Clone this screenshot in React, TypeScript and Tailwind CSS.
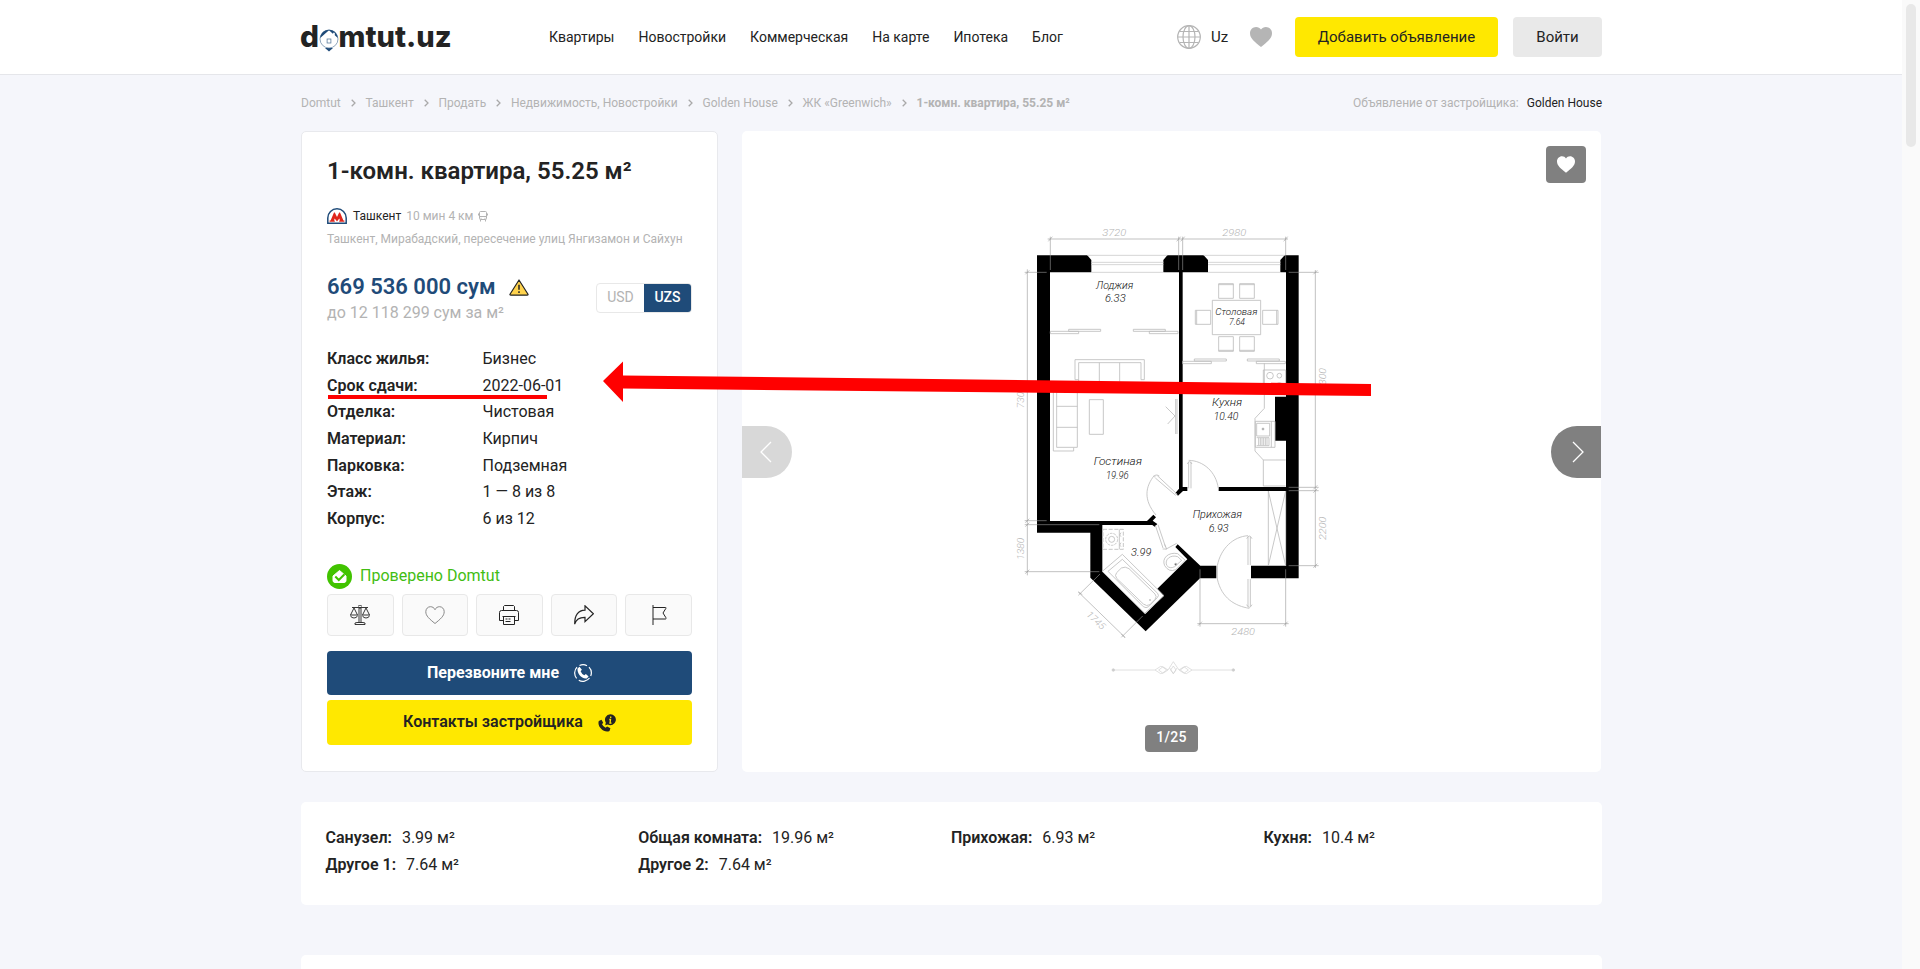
import type { ReactNode } from "react";

const navLinks = ["Квартиры", "Новостройки", "Коммерческая", "На карте", "Ипотека", "Блог"];

const crumbs = ["Domtut", "Ташкент", "Продать", "Недвижимость, Новостройки", "Golden House", "ЖК «Greenwich»"];

const details = [
  ["Класс жилья:", "Бизнес"],
  ["Срок сдачи:", "2022-06-01"],
  ["Отделка:", "Чистовая"],
  ["Материал:", "Кирпич"],
  ["Парковка:", "Подземная"],
  ["Этаж:", "1 — 8 из 8"],
  ["Корпус:", "6 из 12"],
];

const rooms = [
  ["Санузел:", "3.99 м²"],
  ["Общая комната:", "19.96 м²"],
  ["Прихожая:", "6.93 м²"],
  ["Кухня:", "10.4 м²"],
  ["Другое 1:", "7.64 м²"],
  ["Другое 2:", "7.64 м²"],
];

function Logo() {
  return (
    <svg className="w-[152px] h-[36px] shrink-0" viewBox="300 18 152 36">
      <g fontFamily="Inter, sans-serif" fontWeight="800" fontSize="29.500" fill="#232323">
        <text x="300" y="45.500" textLength="19" lengthAdjust="spacingAndGlyphs">d</text>
        <text x="338.500" y="45.500" textLength="113" lengthAdjust="spacingAndGlyphs">mtut.uz</text>
      </g>
      <path d="M329 50.500l-4-3.600h8z" fill="#1f4b79" />
      <circle cx="329" cy="38" r="9" fill="#fff" stroke="#5f7f9f" strokeWidth="0.700" />
      <path d="M320.200 37c1-11 16.600-11 17.600 0l-3-2.700v-2.600h-1.700v1.200l-4.100-3.700z" fill="#1f4b79" />
      <rect x="327.100" y="38" width="3.800" height="4" fill="none" stroke="#5f7f9f" strokeWidth="0.800" />
    </svg>
  );
}

function HeartSolid({ className }: { className: string }) {
  return (
    <svg className={className} viewBox="0 0 22 20" fill="currentColor">
      <path d="M11 20C4.800 15 0 11.500 0 6.300 0 2.800 2.700 0 6.100 0 8.200 0 9.900 1 11 2.600 12.100 1 13.800 0 15.900 0 19.300 0 22 2.800 22 6.300 22 11.500 17.200 15 11 20z" />
    </svg>
  );
}

function Chevron() {
  return (
    <svg className="w-[5px] h-[8px] mx-[9.900px]" viewBox="0 0 5 8" fill="none" stroke="#a9a9a9" strokeWidth="1.300">
      <path d="M.7.7L4 4 .7 7.300" />
    </svg>
  );
}

function Header() {
  return (
    <header className="h-[75px] bg-white border-b border-[#e5e6ea]">
      <div className="w-[1301px] ml-[301px] h-[74px] flex items-center">
        <div className="-ml-px"><Logo /></div>
        <nav className="flex gap-6 ml-[97px] w-[628px] text-[14px]">
          {navLinks.map((l) => (
            <a key={l} className="whitespace-nowrap">{l}</a>
          ))}
        </nav>
        <svg className="w-6 h-6" viewBox="0 0 24 24" fill="none" stroke="#b5b5b5" strokeWidth="1.200">
          <circle cx="12" cy="12" r="11.300" />
          <ellipse cx="12" cy="12" rx="6" ry="11.300" />
          <path d="M12 .7v22.600M.7 12h22.600M2.600 6.500h18.800M2.600 17.500h18.800" />
        </svg>
        <span className="ml-[10px] w-[39px] text-[15px]">Uz</span>
        <HeartSolid className="w-[22px] h-[20px] text-[#b5b5b5]" />
        <button className="ml-[23px] w-[203px] h-10 bg-[#ffe800] rounded-[4px] text-[15px] whitespace-nowrap">Добавить объявление</button>
        <button className="ml-[15px] w-[89px] h-10 bg-[#e9e9e9] rounded-[4px] text-[15px]">Войти</button>
      </div>
    </header>
  );
}

function Breadcrumbs() {
  return (
    <div className="flex items-center h-[56px] text-[12px] text-[#b3b3b3]">
      {crumbs.map((c) => (
        <span key={c} className="flex items-center whitespace-nowrap">
          {c}
          <Chevron />
        </span>
      ))}
      <span className="font-bold">1-комн. квартира, 55.25 м²</span>
      <span className="ml-auto">Объявление от застройщика:</span>
      <span className="ml-[8px] text-[#232323]">Golden House</span>
    </div>
  );
}

function Action({ children }: { children: ReactNode }) {
  return (
    <div className="flex-1 h-[42px] flex items-center justify-center bg-[#fafafa] border border-[#e8e8e8] rounded-[4px]">
      <svg className="w-5 h-5" viewBox="0 0 20 20" fill="none" stroke="#232323" strokeWidth="1">
        {children}
      </svg>
    </div>
  );
}

function InfoCard() {
  return (
    <div className="relative w-[417px] h-[641px] bg-white border border-[#e8e9ed] rounded-[5px] px-[25px] flex flex-col">
      <h1 className="mt-[22px] text-[24px] leading-[34px] font-semibold whitespace-nowrap">1-комн. квартира, 55.25 м²</h1>
      <div className="flex items-center h-4 mt-[20px] text-[12px]">
        <svg className="w-5 h-4" viewBox="0 0 20 16">
          <path d="M.8 15.200V10a9.200 9.200 0 0118.400 0v5.200z" fill="#fff" stroke="#1f4b79" strokeWidth="1.500" />
          <path d="M2.600 13.800v-1.200h1L7 4.500h.8L10 9l2.200-4.500h.8l3.400 8.100h1v1.200h-5.200v-1.200h.8l-.7-2.200L10 13.500l-2.300-3.100-.7 2.200h.8v1.200z" fill="#e0261c" />
        </svg>
        <span className="ml-[6px]">Ташкент</span>
        <span className="ml-[5px] text-[#b3b3b3]">10 мин 4 км</span>
        <svg className="ml-[5px] w-[10px] h-[11px]" viewBox="0 0 10 11" fill="none" stroke="#b3b3b3">
          <rect x="1.500" y=".5" width="7" height="8" rx="1" />
          <path d="M1.500 5.500h7M.5 2.500v2M9.500 2.500v2M2.500 7.300h1M6.500 7.300h1M2.500 8.500v2M7.500 8.500v2" />
        </svg>
      </div>
      <div className="mt-[6px] text-[12px] leading-[18px] text-[#b3b3b3] whitespace-nowrap">Ташкент, Мирабадский, пересечение улиц Янгизамон и Сайхун</div>

      <div className="flex mt-[24px] h-[51px]">
        <div className="flex-1">
          <div className="flex items-center h-[28px]">
            <span className="text-[22px] font-semibold text-[#1f4b79] whitespace-nowrap">669 536 000 сум</span>
            <svg className="ml-[13px] mt-[3px] w-5 h-[17px]" viewBox="0 0 20 17">
              <path d="M10 1l9 14.200q.3 1-.8 1H1.800q-1.100 0-.8-1z" fill="#ffd34d" stroke="#232323" strokeWidth="1.200" strokeLinejoin="round" />
              <path d="M10 5.800v5M10 12.300v1.700" stroke="#232323" strokeWidth="1.500" />
            </svg>
          </div>
          <div className="mt-px text-[16px] leading-[24px] text-[#b3b3b3] whitespace-nowrap">до 12 118 299 сум за м²</div>
        </div>
        <div className="mt-[11px] w-[96px] h-[30px] flex border border-[#e8e8e8] rounded-[4px] overflow-hidden text-[14px] leading-[27px] text-center">
          <span className="w-[47px] text-[#b3b3b3]">USD</span>
          <span className="flex-1 bg-[#1f4b79] text-white font-medium">UZS</span>
        </div>
      </div>

      <div className="mt-[23px]">
        {details.map(([k, v]) => (
          <div key={k} className="flex h-[26.600px] items-center text-[16px] leading-[20px]">
            <span className="w-[155.500px] font-semibold">{k}</span>
            <span>{v}</span>
          </div>
        ))}
      </div>

      <div className="flex items-center mt-[32px] h-[25px] text-[16px] text-[#42bd13]">
        <svg className="w-[25px] h-[25px] mr-2" viewBox="0 0 25 25">
          <circle cx="12.500" cy="12.500" r="12.500" fill="#41c300" />
          <path d="M12.500 6.500l6.500 5.500v4.500q0 2-2 2h-9q-2 0-2-2v-4.500z" fill="#fff" stroke="#fff" strokeLinejoin="round" />
          <path d="M8.300 12.500l3.500 3.500 5.700-5.700" fill="none" stroke="#41c300" strokeWidth="2" />
        </svg>
        <span className="mb-[2px]">Проверено Domtut</span>
      </div>

      <div className="flex gap-2 mt-[5px]">
        <Action>
          <path d="M5 19.500h10v-1.500l-2-.5H7l-2 .5zM9 17.500V3h2v14.500M2 2.500h16M8.500 1.500a1.500 1.500 0 013 0M4 3l-3.500 7h7zM16 3l-3.500 7h7zM.5 10.500q.5 2.500 3.500 2.500t3.500-2.500M12.500 10.500q.5 2.500 3.500 2.500t3.500-2.500" strokeWidth=".9" />
        </Action>
        <Action>
          <path d="M10 18.500C4.500 14 .8 11 .8 6.700c0-2.900 2.100-5 4.600-5 2 0 3.700 1 4.600 3 .9-2 2.600-3 4.600-3 2.500 0 4.600 2.100 4.600 5 0 4.300-3.700 7.300-9.200 11.800z" stroke="#888" />
        </Action>
        <Action>
          <path d="M4.500 5.500v-4l1-1h9l1 1v4M4.500 15.500h-4v-8q0-2 2-2h15q2 0 2 2v8h-4M3.500 11.500h13M4.500 11.500h11v8h-11zM6.500 14h2M9.500 14h2M6.500 16.500h5" />
        </Action>
        <Action>
          <path d="M11 .8v4.400C4.200 5.300.5 10.500.7 19.200 2.200 14 6 12.300 11 12.400v4.300l8.400-8z" strokeWidth="1.200" />
        </Action>
        <Action>
          <path d="M4 0v20M4 2.500h12.500q1 0 .3 1l-2.800 4.500 2.800 4.500q.7 1.500-.3 1.500H4" />
        </Action>
      </div>

      <button className="mt-[15px] h-[44px] bg-[#1f4b79] rounded-[4px] text-white text-[16px] font-bold flex items-center justify-center">
        <span className="mb-px">Перезвоните мне</span>
        <svg className="ml-[15px] w-[18px] h-[18px]" viewBox="0 0 18 18">
          <path d="M3 3.200A8.300 8.300 0 002.600 14.300M4.800 16.200A8.300 8.300 0 0015.500 14M16.700 12A8.300 8.300 0 0015 3.200M13 1.700A8.300 8.300 0 005.500 1.500" fill="none" stroke="#fff" strokeWidth="1.200" />
          <path d="M3.500 4.500l2-1.700 2.400 3-1.300 1.500q1 2.700 3.700 3.900l1.600-1.300 2.700 2.600-1.900 1.900C7.500 15.200 3 9.500 3.500 4.500z" fill="#fff" />
        </svg>
      </button>
      <button className="mt-[5px] h-[45px] bg-[#ffe800] rounded-[4px] text-[16px] font-semibold flex items-center justify-center">
        <span className="mb-[2px]">Контакты застройщика</span>
        <svg className="ml-[15px] w-[18px] h-[18px]" viewBox="0 0 18 18" fill="#232323">
          <path d="M.8 7l2.700-1.200 1.700 3-1.200 1.500q1.100 2.300 3.600 3.500l1.500-1.200 3.300 1.600-.9 2.700C6.500 19.500-1.300 13 .8 7z" />
          <path d="M12.300.3a5.400 5.400 0 11-2.500 10.100l-2.500.8.500-2.700A5.400 5.400 0 0112.300.3z" />
          <path d="M12.700 2.500v1.600M11.300 5.500h1.200l-.5 3.700h1.500" stroke="#ffe800" strokeWidth="1.300" fill="none" />
        </svg>
      </button>
      {/* highlight under the completion date */}
      <div className="absolute left-[26px] top-[263px] w-[219px] h-[4px] bg-[#ff0000]" />
    </div>
  );
}

function FloorPlan() {
  return (
    <svg className="w-[340px] h-[480px]" viewBox="0 0 1020 1440" fill="none" stroke="#bdbdbd" strokeWidth="2.500">
      {/* walls */}
      <g fill="#000" stroke="none">
        <path d="M111 136H262L274 150V187H150V933H304V944H307V1085L436 1212L491 1157L472 1136L562 1048L526 1011L533 1003L601 1067H649V1105H600L437 1264L271 1103V968H111z" />
        <path d="M490 187V150L502 136H611L624 150V187H548V831H562V843H549L534 857L526 849L537 836V187z" />
        <path d="M841 187V150L854 136H896V1105H753V1067H858V843H656V831H858V692H825V560H858V187z" />
        <path d="M300 933H441L460 914L468 922L458 932L472 942L464 950L457 945H300z" />
      </g>
      {/* windows */}
      <path d="M262 136H502M274 157H490M274 164H490M274 187H490M611 136H854M624 157H841M624 164H841M624 187H841" stroke="#ccc" />
      {/* dimension lines */}
      <g stroke="#999" strokeWidth="1.800">
        <path d="M143 87H864M151 80V180M536 80V180M548 80V180M857 80V180M145 94l12-14M530 94l12-14M542 94l12-14M851 94l12-14" />
        <path d="M82 178V1096M74 187H140M74 932H140M74 944H298M74 1085H298M76 193l12-12M76 938l12-12M76 950l12-12M76 1091l12-12" />
        <path d="M946 180V1074M866 187H956M866 832H956M866 842H956M866 1067H956M940 193l12-12M940 838l12-12M940 848l12-12M940 1073l12-12" />
        <path d="M592 1241H866M600 1078V1250M857 1078V1250M594 1247l12-12M851 1247l12-12" />
        <path d="M235 1146L375 1282M235 1156L300 1092M364 1282L428 1218M235 1146l12 8M364 1272l12 12" />
      </g>
      {/* sliding doors */}
      <path d="M151 364H236V371H151zM206 358H302V364H206zM400 358H496V364H400zM448 364H534V371H448zM548 454H634V461H548zM583 447H679V453H583zM742 447H838V453H742zM769 454H856V461H769z" />
      {/* dining set */}
      <path d="M637 271H782V374H637zM656 221H700V265H656zM719 221H763V265H719zM656 380H700V424H656zM719 380H763V424H719zM586 301H632V343H586zM788 301H834V343H788zM656 224H700M719 224H763M656 421H700M719 421H763M590 301V343M830 301V343" />
      {/* sofas, coffee table, tv */}
      <path d="M225 509V449H433V509H423V458H236V515M225 509H236M298 458V515M359 458V515M170 545H232V712H170zM170 589H232M170 652H232M160 545V723H221V713M268 569H310V673H268zM527 567V672M497 590L525 618 503 642M531 567V672" />
      {/* kitchen */}
      <path d="M790 480H857V550H790zM793 460V595L765 625V723L790 750V828H857M790 750H857M766 634H825V712H766zM770 640H809V678H770zM770 683H807V707H770M776 684V706M781 684V706M786 684V706M791 684V706M796 684V706M801 684V706M814 634V712" />
      <circle cx="810" cy="497" r="10" />
      <circle cx="838" cy="497" r="7" />
      <circle cx="810" cy="528" r="7" />
      <circle cx="838" cy="528" r="10" />
      <circle cx="789" cy="657" r="3" fill="#888" />
      {/* wardrobe */}
      <path d="M805 843V1067M857 843L805 1067M805 843L857 1067M857 843V1067" />
      {/* doors */}
      <path d="M566 755V835M573 755V835M562 762q6-14 14 0M566 751C610 752 648 785 655 835M472 797L532 853M466 804L527 856M464 795C435 830 430 870 468 915M464 802q0-12 14-4M466 946L489 1014M474 944L497 1012M488 1017h12l-6-14M497 1018L530 1000" />
      <path d="M744 980V1065M751 980V1065M740 986q8-16 16 0M744 977C700 980 662 1015 652 1067M744 1107V1190M751 1107V1190M740 1184q8 16 16 0M748 1195C705 1188 665 1165 652 1107M652 1067V1107" />
      {/* bathroom */}
      <path d="M307 1084L367 1033L492 1157L434 1210zM324 1084L367 1048L473 1150Q478 1157 472 1163L446 1190Q438 1196 430 1190zM350 1105Q343 1096 350 1088L364 1074Q376 1068 387 1076L465 1152Q472 1160 465 1168L450 1184Q440 1190 430 1182z" />
      <path d="M309 958H370V1018H309z" strokeDasharray="12 5" />
      <path d="M358 958V1018M363 968q-8 8 0 12M363 998q-8 8 0 12" />
      <circle cx="335" cy="988" r="18" strokeDasharray="8 3" />
      <circle cx="335" cy="988" r="9" />
      <path d="M494 1067C484 1045 505 1025 533 1031L556 1051 527 1079Q507 1088 494 1067zM500 1066C493 1048 512 1033 533 1040L545 1051 524 1070Q509 1078 500 1066z" />
      <circle cx="527" cy="1063" r="3" fill="#555" />
      <circle cx="450" cy="1170" r="2" />
      {/* divider ornament */}
      <g stroke="#d0d0d0" strokeWidth="2">
        <path d="M345 1380H465M576 1380H696M465 1380L482 1369Q490 1369 504 1380 490 1391 482 1391zM576 1380L559 1369Q551 1369 537 1380 551 1391 559 1391zM476 1380l12-9 12 9-12 9zM541 1380l12-9 12 9-12 9zM504 1380l16-25 17 25M509 1374l11 17 11-17M520 1368l8 12-8 11-8-11z" />
        <circle cx="340" cy="1380" r="4" fill="#ccc" />
        <circle cx="700" cy="1380" r="4" fill="#ccc" />
      </g>
      {/* room labels */}
      <g fill="#111" stroke="none" fontFamily="Roboto, sans-serif" fontStyle="italic" fontWeight="300" fontSize="33">
        <text x="288" y="237" textLength="112" lengthAdjust="spacingAndGlyphs">Лоджия</text>
        <text x="315" y="276" textLength="62" lengthAdjust="spacingAndGlyphs">6.33</text>
        <text x="646" y="315" fontSize="28" textLength="126" lengthAdjust="spacingAndGlyphs">Столовая</text>
        <text x="687" y="345" fontSize="29" textLength="48" lengthAdjust="spacingAndGlyphs">7.64</text>
        <text x="636" y="589" textLength="90" lengthAdjust="spacingAndGlyphs">Кухня</text>
        <text x="641" y="630" textLength="74" lengthAdjust="spacingAndGlyphs">10.40</text>
        <text x="281" y="766" textLength="145" lengthAdjust="spacingAndGlyphs">Гостиная</text>
        <text x="318" y="807" textLength="68" lengthAdjust="spacingAndGlyphs">19.96</text>
        <text x="578" y="924" textLength="148" lengthAdjust="spacingAndGlyphs">Прихожая</text>
        <text x="626" y="966" textLength="60" lengthAdjust="spacingAndGlyphs">6.93</text>
        <text x="393" y="1038" textLength="61" lengthAdjust="spacingAndGlyphs">3.99</text>
      </g>
      <g fill="#b5b5b5" stroke="none" fontFamily="Roboto, sans-serif" fontStyle="italic" fontWeight="300" fontSize="29">
        <text x="307" y="77" textLength="72" lengthAdjust="spacingAndGlyphs">3720</text>
        <text x="667" y="77" textLength="72" lengthAdjust="spacingAndGlyphs">2980</text>
        <text x="694" y="1274" textLength="71" lengthAdjust="spacingAndGlyphs">2480</text>
        <text transform="translate(72 595) rotate(-90)" textLength="66" lengthAdjust="spacingAndGlyphs">7300</text>
        <text transform="translate(72 1049) rotate(-90)" textLength="66" lengthAdjust="spacingAndGlyphs">1380</text>
        <text transform="translate(978 542) rotate(-90)" textLength="68" lengthAdjust="spacingAndGlyphs">7300</text>
        <text transform="translate(978 990) rotate(-90)" textLength="70" lengthAdjust="spacingAndGlyphs">2200</text>
        <text transform="translate(257 1216) rotate(43)" textLength="66" lengthAdjust="spacingAndGlyphs">1745</text>
      </g>
    </svg>
  );
}

function Gallery() {
  return (
    <div className="relative w-[859px] h-[641px] mr-px bg-white rounded-[5px] overflow-hidden pl-[258px] pt-[79px]">
      <FloorPlan />
      <button className="absolute right-[15px] top-[15px] w-10 h-[37px] bg-[#808080] rounded-[4px] flex items-center justify-center">
        <HeartSolid className="w-[18px] h-[17px] text-white" />
      </button>
      <button className="absolute left-0 top-[295px] w-[50px] h-[52px] rounded-r-full bg-[#d8d8d8] flex items-center justify-center">
        <svg className="w-3 h-[22px] mr-[2px]" viewBox="0 0 12 22" fill="none" stroke="#fff" strokeWidth="1.300">
          <path d="M11 1L1 11l10 10" />
        </svg>
      </button>
      <button className="absolute right-0 top-[295px] w-[50px] h-[52px] rounded-l-full bg-[#808080] flex items-center justify-center">
        <svg className="w-3 h-[22px] ml-[3px]" viewBox="0 0 12 22" fill="none" stroke="#fff" strokeWidth="1.300">
          <path d="M1 1l10 10L1 21" />
        </svg>
      </button>
      <span className="absolute left-[403px] top-[594px] w-[53px] h-[27px] bg-[#808080] rounded-[4px] text-white text-[14px] font-medium tracking-[0.3px] leading-[25px] text-center">1/25</span>
    </div>
  );
}

export default function App() {
  return (
    <div className="relative flex h-[969px] w-[1920px] overflow-hidden bg-[#f5f6fb] font-['Roboto',sans-serif] text-[#232323]">
      <div className="flex-1">
        <Header />
        <main className="w-[1301px] ml-[301px]">
          <Breadcrumbs />
          <div className="flex justify-between">
            <InfoCard />
            <Gallery />
          </div>
          <section className="mt-[30px] h-[103px] bg-white rounded-[5px] pl-[24.500px] pt-[22px]">
            <div className="grid grid-cols-[repeat(4,312.700px)] auto-rows-[27px] text-[16px] leading-[27px]">
              {rooms.map(([k, v]) => (
                <div key={k} className="whitespace-nowrap">
                  <span className="font-semibold mr-[10px]">{k}</span>
                  {v}
                </div>
              ))}
            </div>
          </section>
          <section className="mt-[50px] h-10 bg-white rounded-t-[5px]" />
        </main>
      </div>
      <div className="w-[18px] bg-[#fafafa] pt-1 pl-1">
        <div className="w-[10px] h-[143px] rounded-full bg-[#e8e8e8]" />
      </div>
      {/* red pointer to the completion date */}
      <svg className="absolute left-[600px] top-[355px] w-[775px] h-[52px]" viewBox="600 355 775 52" fill="#ff0000">
        <path d="M603 381L623 361.500V375.500L1371 384V396L623 388.500V402z" />
      </svg>
    </div>
  );
}
